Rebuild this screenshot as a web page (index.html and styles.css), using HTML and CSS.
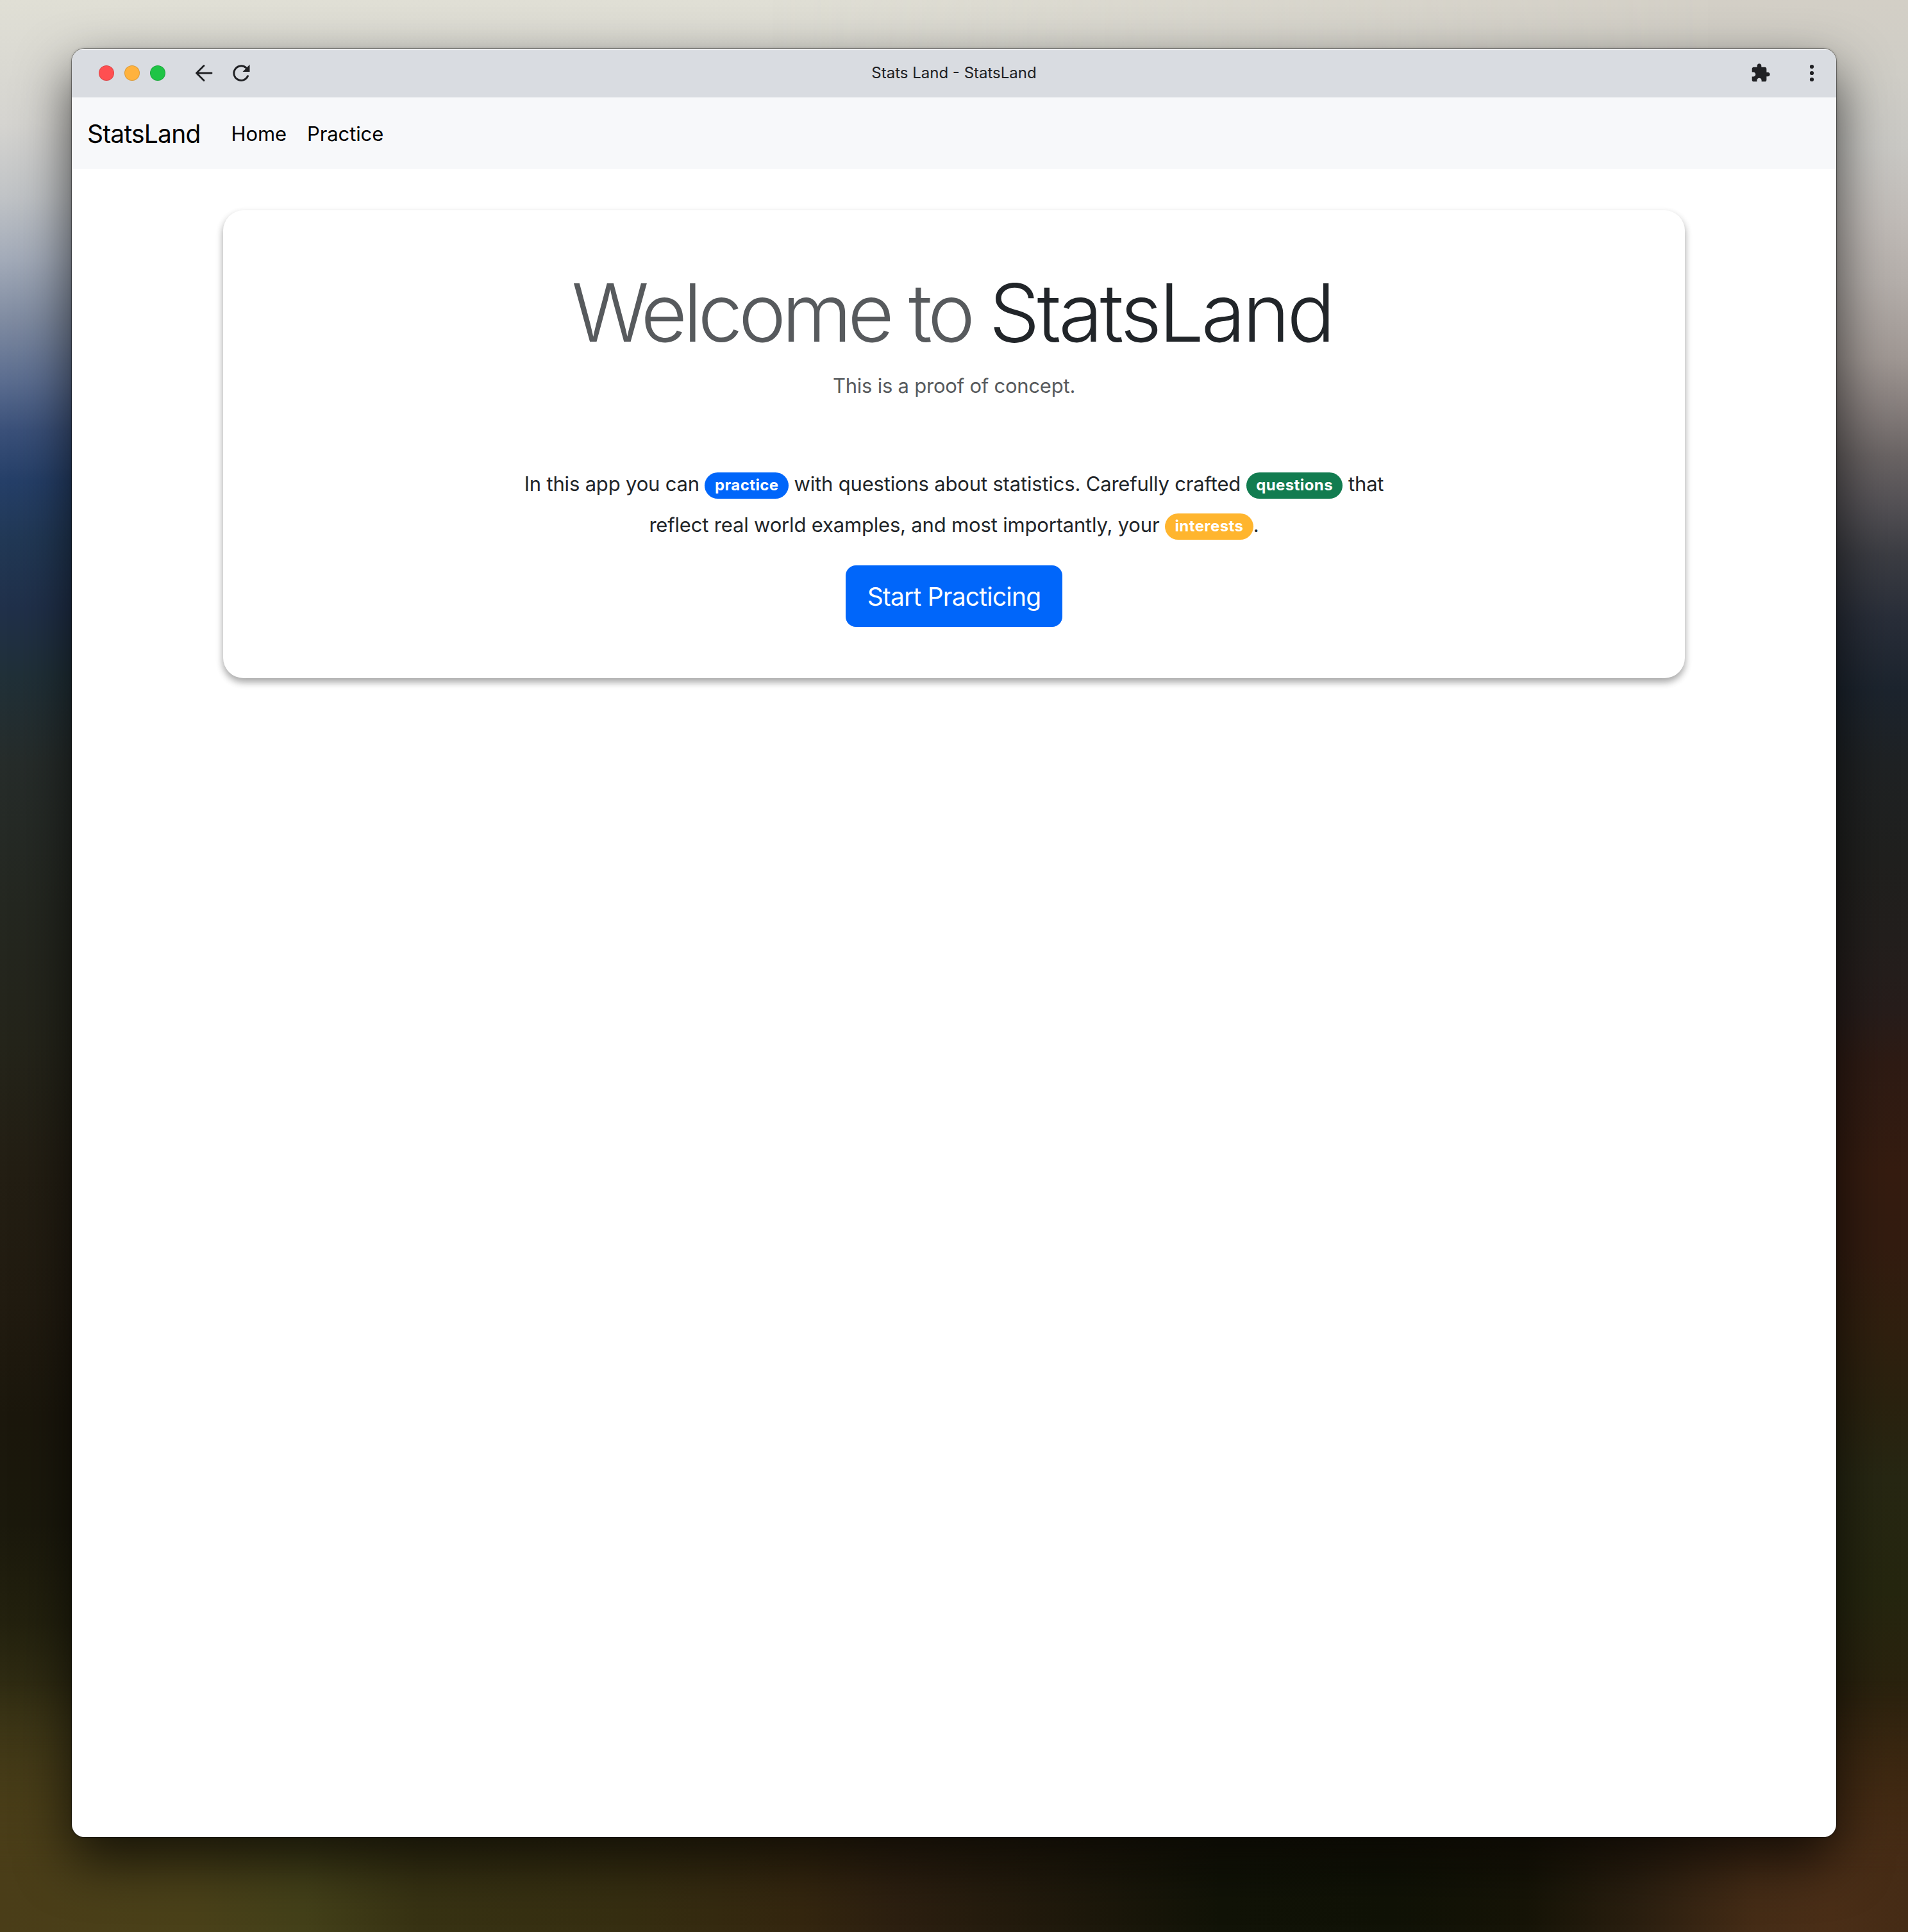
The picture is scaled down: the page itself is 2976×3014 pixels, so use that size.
FILE: index.html
```html
<!DOCTYPE html>
<html lang="en">
<head>
<meta charset="utf-8">
<title>Stats Land - StatsLand</title>
<link rel="stylesheet" href="styles.css">
</head>
<body>
<div class="desktop">
  <div class="window">
    <header class="titlebar">
      <div class="titlebar-left">
        <div class="lights"><span class="light light-close"></span><span class="light light-min"></span><span class="light light-max"></span></div>
        <svg class="icon icon-back" viewBox="0 0 32 32" fill="none" stroke="#202124" stroke-width="2.9" stroke-linecap="round" stroke-linejoin="round"><path d="M28 16H5M16 4.500L4.500 16L16 27.500"/></svg>
        <svg class="icon icon-reload" viewBox="0 0 32 32"><path d="M26.500 20.700A11.300 11.300 0 1 1 23.700 7.700" fill="none" stroke="#202124" stroke-width="3" stroke-linecap="round"/><path d="M29.500 2.800V14H18.500Z" fill="#202124"/></svg>
      </div>
      <div class="window-title">Stats Land - StatsLand</div>
      <div class="titlebar-right">
        <svg class="icon icon-puzzle" viewBox="0 0 24 24" fill="#202124"><path d="M20.500 11H19V7c0-1.100-.9-2-2-2h-4V3.500C13 2.120 11.880 1 10.500 1S8 2.120 8 3.500V5H4c-1.100 0-1.990.9-1.990 2v3.800H3.500c1.490 0 2.700 1.210 2.700 2.700s-1.210 2.700-2.700 2.700H2V20c0 1.100.9 2 2 2h3.800v-1.500c0-1.490 1.210-2.700 2.700-2.700 1.490 0 2.700 1.210 2.700 2.700V22H17c1.100 0 2-.9 2-2v-4h1.500c1.380 0 2.500-1.120 2.500-2.500S21.880 11 20.500 11z"/></svg>
        <svg class="icon icon-more" viewBox="0 0 32 32" fill="#202124"><circle cx="16" cy="6" r="3.100"/><circle cx="16" cy="16" r="3.100"/><circle cx="16" cy="26" r="3.100"/></svg>
      </div>
    </header>
    <nav class="navbar">
      <a class="brand">StatsLand</a>
      <a class="nav-link">Home</a>
      <a class="nav-link">Practice</a>
    </nav>
    <main class="content">
      <section class="hero">
        <h1 class="hero-title"><span class="muted">Welcome to</span> <span class="name">StatsLand</span></h1>
        <p class="hero-subtitle">This is a proof of concept.</p>
        <p class="hero-text">In this app you can <span class="badge badge-blue">practice</span> with questions about statistics. Carefully crafted <span class="badge badge-green">questions</span> that reflect real world examples, and most importantly, your <span class="badge badge-yellow">interests</span>.</p>
        <a class="button">Start Practicing</a>
      </section>
    </main>
  </div>
</div>
</body>
</html>
```
FILE: styles.css
```css
* { box-sizing: border-box; }
body { margin: 0; font-family: Inter, "Liberation Sans", sans-serif; color: #212529; }
.desktop {
  position: relative; width: 2976px; height: 3014px; padding: 76px 112px 148px; overflow: hidden; isolation: isolate;
  background: linear-gradient(to bottom, #e0dfd5 0%, #d5d4d0 6.400%, #c0c3c6 10.200%, #a3abb9 13.400%, #7f8ba1 16.600%, #5a6c8f 19.800%, #3a5079 22.300%, #253f68 24.900%, #213855 28%, #20304a 31.500%, #203038 35%, #262c2a 39.500%, #242720 47%, #24241a 54%, #231e13 60.500%, #211b10 67.500%, #1b170c 73.300%, #1b190c 79%, #23210e 84%, #373215 89.300%, #473d18 94%, #4a3d18 100%);
}
.desktop::before, .desktop::after { content: ""; position: absolute; inset: 0; z-index: -1; }
.desktop::before {
  background: linear-gradient(to bottom, #d3cfc6 0%, #cfcdc6 4%, #c9c8c4 7.600%, #c0bbb7 11.500%, #b4aeaa 14.700%, #a09894 18.500%, #877f7d 21%, #6a6464 23.600%, #555256 26%, #3c3d43 28.700%, #292e39 32%, #1c242e 35.700%, #1f2224 39.500%, #20201e 44.600%, #231f1d 48.500%, #271d1b 52.300%, #2e1b14 55%, #351c10 60.600%, #331c10 64.400%, #30200f 69%, #2a220f 72.700%, #272713 76.500%, #25260f 82.300%, #2b220e 88%, #38260f 92.500%, #4a2e17 97%, #452c16 100%);
  mask-image: linear-gradient(to right, transparent 40%, #000 90%);
}
.desktop::after {
  background: linear-gradient(to right, #4a3d18 0%, #4a4119 10%, #434019 16%, #373213 22%, #362e11 33%, #34260f 42%, #2c1f10 47%, #1d180b 57%, #111307 64%, #101206 73%, #161407 80%, #2b1f10 86%, #452c16 92%, #4a2e17 96%, #452b15 100%);
  mask-image: linear-gradient(to bottom, transparent 87%, #000 97%);
}
.window {
  position: relative; height: 2790px; border-radius: 20px; background: #fff; overflow: hidden;
  box-shadow: 0 0 0 1px rgba(0,0,0,.35), 0 0 4px rgba(0,0,0,.3), 0 36px 84px rgba(0,0,0,.7);
}
.titlebar {
  height: 76px; display: grid; grid-template-columns: 1fr auto 1fr; align-items: center; padding: 0 22px;
  background: #d9dce1; box-shadow: inset 0 2px 1px rgba(255,255,255,.7);
}
.titlebar-left, .titlebar-right, .lights { display: flex; align-items: center; }
.titlebar-right { justify-content: flex-end; gap: 48px; }
.lights { gap: 16px; margin: 0 44px 0 20px; }
.light { width: 24px; height: 24px; border-radius: 50%; border: 1px solid rgba(0,0,0,.13); }
.light-close { background: #ff4f51; }
.light-min { background: #ffb23d; }
.light-max { background: #1fc445; }
.icon { width: 32px; height: 32px; display: block; flex: none; }
.icon-reload { margin-left: 26px; }
.window-title { font-size: 24px; line-height: 32px; color: #202124; }
.navbar { height: 112px; display: flex; align-items: center; padding: 0 24px; background: #f7f8fa; color: #000; }
.brand { font-size: 39px; letter-spacing: -.8px; margin-right: 32px; }
.nav-link { font-size: 31px; letter-spacing: -.1px; padding: 0 16px; }
.content { padding-top: 64px; }
.hero {
  width: 2280px; height: 730px; margin: 0 auto; padding-top: 83px; border-radius: 32px; background: #fff; text-align: center;
  box-shadow: 0 6px 12px rgba(0,0,0,.16), 0 6px 12px rgba(0,0,0,.23);
}
.hero-title { margin: 0; padding-right: 6px; font-size: 125px; line-height: 154px; font-weight: 320; letter-spacing: -7px; }
.muted { color: #575a5d; letter-spacing: -6.400px; }
.name { letter-spacing: -4.300px; }
.hero-subtitle { margin: 13px 0 97px; font-size: 31px; line-height: 48px; letter-spacing: -.23px; color: #575a5d; }
.hero-text { width: 1400px; margin: 0 auto 31px; font-size: 31px; line-height: 64px; letter-spacing: -.18px; }
.badge { display: inline-block; padding: 8.500px 15.500px; border-radius: 21px; font-size: 24px; line-height: 24px; font-weight: 700; letter-spacing: .4px; color: #fff; vertical-align: 1px; }
.badge-blue, .button { background: #0066fa; }
.badge-green { background: #127c50; }
.badge-yellow { background: #ffb52e; }
.button { display: inline-block; height: 96px; padding: 0 34px; border-radius: 16px; font-size: 39px; line-height: 97px; letter-spacing: -.8px; color: #fff; }
```
